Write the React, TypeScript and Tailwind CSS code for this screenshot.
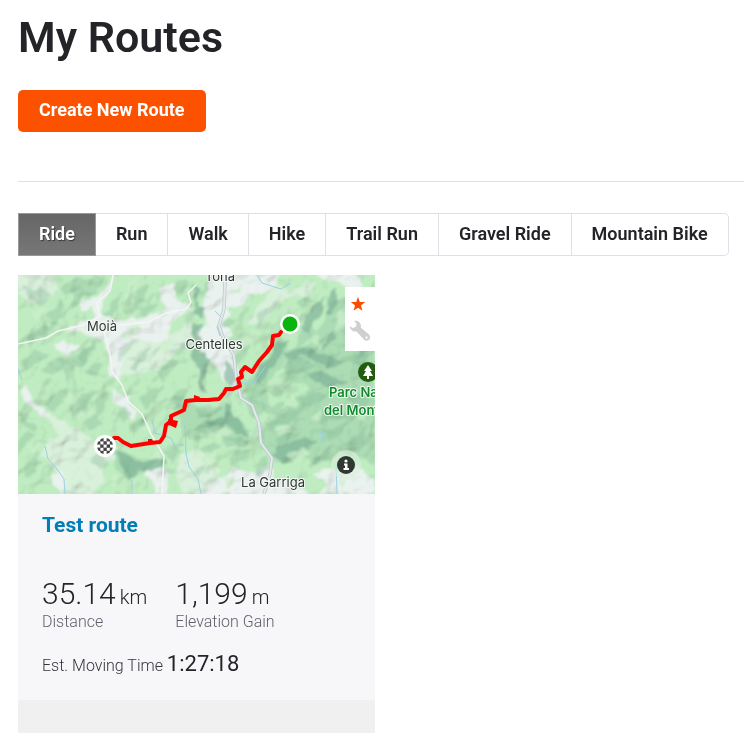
import React, { useState } from 'react';

const TABS = ['Ride', 'Run', 'Walk', 'Hike', 'Trail Run', 'Gravel Ride', 'Mountain Bike'];

const ROUTE =
  'M263 57 L261 60 L255 61 L254 70 L249 77 L241 86 L234 97 L227 92 L223 97 L224 102 L220 104 L222 111 L215 114 L208 114 L206 118 L201 124 L190 125 L178 125 L168 126 L166 135 L153 141 L153 146 L148 150 L146 161 L142 167 L132 168 L113 171 L105 167 L100 163 L96 163';

// valleys and open ground
const PLAINS = [
  'M195 0 L260 0 L256 14 L235 20 L226 29 L210 30 L212 40 L205 50 L214 60 L205 68 L216 73 L222 100 L219 113 L207 106 L196 86 L182 75 L178 60 L190 48 L183 30 L190 16 Z',
  'M62 27 L80 21 L92 9 L97 2 L93 15 L85 24 L83 40 L108 45 L130 41 L150 33 L142 23 L146 10 L156 8 L157 24 L171 31 L176 35 L160 42 L152 49 L150 63 L138 66 L118 64 L106 78 L104 90 L101 108 L92 100 L91 80 L87 69 L72 60 L44 55 L62 47 L77 42 L74 32 L62 36 Z',
  'M37 70 L48 63 L52 69 L62 68 L60 75 L48 80 L40 76 Z',
  'M3 110 L12 114 L17 128 L31 139 L24 140 L15 133 L6 127 Z',
  'M93 110 L99 119 L109 122 L119 136 L115 145 L104 130 L96 126 Z',
  'M33 200 L43 197 L48 206 L44 219 L34 208 Z',
  'M126 199 L142 190 L151 198 L149 219 L136 219 L137 211 Z',
  'M205 204 L216 193 L230 199 L247 191 L256 192 L255 205 L276 206 L290 219 L187 219 L190 210 Z',
  'M297 199 L312 193 L325 199 L340 191 L357 207 L357 219 L301 219 L309 209 Z',
  'M298 0 L338 0 L345 9 L333 15 L322 8 L306 5 Z',
];

const PALE = [
  'M0 0 L35 0 L42 14 L27 25 L9 27 L0 18 Z',
  'M93 82 L106 65 L128 56 L151 61 L170 48 L177 54 L172 69 L152 84 L139 97 L118 98 L101 104 Z',
  'M23 132 L36 140 L48 149 L60 151 L68 162 L89 170 L97 184 L84 192 L86 205 L70 219 L47 219 L45 204 L33 190 L23 180 L29 167 L42 160 L31 149 Z',
  'M258 9 L273 16 L288 7 L299 9 L285 23 L270 21 L247 45 L230 51 L240 31 Z',
  'M163 180 L180 174 L191 184 L202 195 L190 219 L166 219 L157 203 Z',
];

const WOODS = [
  'M239 96 L255 70 L267 67 L271 82 L258 97 L247 112 L252 129 L244 136 L230 122 L227 108 Z',
  'M268 76 L292 67 L312 81 L330 86 L357 90 L357 190 L342 182 L331 173 L314 186 L286 182 L268 190 L250 178 L241 157 L261 137 L276 123 L293 112 L270 106 Z',
  'M304 78 L300 56 L312 28 L330 18 L357 26 L357 100 L330 90 Z',
  'M92 176 L109 176 L124 185 L144 181 L132 193 L119 194 L111 204 L98 191 Z',
  'M157 121 L177 128 L188 138 L208 131 L218 143 L234 155 L228 167 L207 165 L187 153 L178 169 L164 160 L162 142 Z',
  'M50 16 L66 11 L78 0 L87 0 L79 17 L60 24 Z',
];

// shaded sides of the ridges
const RIDGES = [
  'M4 10 L15 15 L25 12 L32 20 L24 29 L10 22 Z', 'M28 42 L39 32 L45 22 L43 42 L36 53 Z',
  'M44 11 L59 3 L69 6 L57 17 L48 20 Z', 'M51 25 L65 17 L75 15 L63 25 L55 34 Z',
  'M9 61 L23 50 L38 53 L24 62 L12 69 Z', 'M3 87 L18 76 L31 79 L22 87 L9 94 Z',
  'M23 94 L42 82 L52 87 L37 98 Z', 'M43 94 L58 82 L71 72 L68 88 L53 98 L49 108 Z',
  'M63 77 L78 64 L74 78 L62 91 Z', 'M68 97 L80 87 L87 89 L76 101 Z',
  'M86 39 L96 25 L105 16 L101 29 L96 42 Z', 'M103 38 L116 28 L121 13 L129 9 L126 25 L113 40 Z',
  'M119 39 L131 30 L142 29 L130 40 Z', 'M155 12 L166 3 L172 5 L165 14 L159 20 Z',
  'M101 76 L113 65 L118 67 L108 78 L100 87 Z', 'M111 91 L124 77 L132 69 L128 83 L116 96 Z',
  'M140 97 L151 87 L162 87 L151 98 L145 109 Z', 'M153 77 L164 68 L170 70 L162 81 Z',
  'M182 17 L189 9 L195 4 L190 18 Z', 'M192 61 L199 69 L207 67 L200 75 Z',
  'M201 48 L212 43 L220 45 L209 53 Z', 'M212 83 L224 72 L236 59 L232 74 L219 91 Z',
  'M239 38 L255 29 L266 28 L250 40 L241 50 Z', 'M251 63 L259 61 L270 66 L260 73 Z',
  'M278 28 L286 21 L298 24 L286 32 Z', 'M281 60 L295 48 L300 59 L288 65 L280 73 Z',
  'M264 92 L277 83 L290 87 L303 91 L287 95 L272 99 Z', 'M323 83 L338 77 L353 81 L342 90 Z',
  'M249 116 L262 111 L276 99 L273 112 L261 123 Z', 'M240 127 L255 131 L267 125 L261 138 L249 139 Z',
  'M245 149 L262 145 L276 133 L289 128 L282 141 L267 150 L254 156 Z',
  'M256 165 L270 157 L283 159 L271 167 L260 174 Z',
  'M281 122 L295 116 L309 121 L298 128 L285 132 Z', 'M300 138 L314 132 L328 140 L313 145 L304 153 Z',
  'M305 158 L318 150 L332 146 L324 158 L309 167 Z', 'M323 176 L337 161 L349 150 L345 167 L334 179 Z',
  'M327 122 L344 118 L355 126 L341 132 Z', 'M291 185 L306 177 L318 175 L309 186 L297 192 Z',
  'M179 132 L192 129 L204 133 L194 140 L183 143 Z', 'M176 153 L190 144 L206 144 L201 157 L188 161 Z',
  'M203 164 L217 162 L231 164 L225 173 L210 171 Z',
  'M181 174 L195 167 L205 169 L191 180 Z', 'M210 183 L222 175 L235 174 L224 185 L214 190 Z',
  'M226 121 L236 123 L244 138 L237 143 L230 131 Z', 'M235 197 L248 182 L251 191 L242 203 Z',
  'M25 130 L39 118 L53 112 L49 125 L36 137 Z', 'M51 132 L64 121 L76 117 L67 132 L56 142 Z',
  'M77 127 L87 115 L91 118 L86 136 L79 143 Z', 'M98 141 L106 130 L114 139 L104 150 Z',
  'M109 151 L122 143 L129 147 L117 157 Z', 'M65 147 L78 139 L84 147 L71 157 Z',
  'M0 167 L9 157 L16 162 L7 171 L0 179 Z', 'M6 193 L15 181 L25 187 L15 199 L7 205 Z',
  'M2 137 L10 146 L20 151 L15 159 L3 150 Z', 'M72 186 L82 179 L91 190 L82 194 Z',
  'M145 178 L157 170 L164 178 L154 187 Z', 'M151 129 L160 117 L169 115 L162 128 Z',
  'M122 123 L134 114 L147 111 L139 124 L127 134 Z', 'M174 200 L184 190 L193 188 L182 202 Z',
  'M319 35 L337 26 L352 35 L342 45 L329 45 Z', 'M327 62 L344 53 L355 61 L341 68 Z',
];

// steep slopes
const SLOPES = [
  'M174 46 L184 49 L182 74 L193 84 L190 96 L184 104 L187 118 L180 116 L180 96 L173 82 L176 66 Z',
  'M174 10 L181 14 L180 30 L187 34 L182 42 L175 38 L178 26 Z',
  'M207 84 L214 92 L218 106 L211 110 L207 99 Z',
  'M237 102 L247 86 L258 67 L269 66 L262 82 L250 98 L240 110 Z',
  'M207 128 L213 129 L215 142 L227 151 L233 160 L222 160 L209 149 L192 152 L189 147 L207 142 Z',
  'M96 176 L108 178 L121 188 L143 183 L150 187 L135 196 L121 196 L112 206 L107 194 Z',
  'M265 78 L290 72 L312 82 L330 86 L318 92 L300 88 L284 81 L270 86 Z',
  'M288 100 L304 95 L316 104 L330 107 L314 114 L298 107 Z',
  'M283 53 L292 35 L306 22 L302 40 L290 58 Z M303 76 L312 58 L327 47 L318 66 Z M306 41 L313 18 L320 15 L316 40 Z',
  'M250 180 L266 170 L285 162 L300 165 L284 177 L268 190 Z',
  'M335 66 L347 58 L357 60 L357 76 L344 80 Z',
];

const HIGHLIGHTS = [
  'M12 36 L26 30 L31 36 L19 44 Z', 'M65 52 L77 48 L72 57 Z', 'M106 59 L117 48 L123 54 L109 64 Z',
  'M110 9 L122 4 L117 17 L107 24 Z', 'M136 72 L151 64 L157 69 L144 77 Z', 'M227 61 L241 53 L241 62 L225 76 Z',
  'M209 17 L225 11 L222 20 Z', 'M267 39 L281 42 L274 52 Z', 'M320 37 L331 29 L329 48 L318 62 Z',
  'M259 107 L272 109 L264 119 Z', 'M268 129 L278 120 L281 130 Z', 'M257 151 L269 149 L273 156 L260 161 Z',
  'M291 145 L304 134 L303 146 Z', 'M266 181 L285 172 L292 177 L278 188 Z', 'M184 124 L199 125 L189 133 Z',
  'M192 159 L207 152 L215 157 L203 164 Z', 'M182 182 L198 176 L202 183 L188 195 Z',
  'M43 127 L55 117 L57 127 Z', 'M60 140 L73 131 L74 143 Z', 'M9 171 L23 168 L17 178 Z',
  'M122 153 L137 151 L132 161 Z', 'M130 181 L145 173 L143 183 Z', 'M92 199 L102 202 L96 213 Z',
  'M338 140 L349 135 L344 148 Z', 'M208 202 L219 204 L207 217 Z', 'M317 205 L328 201 L325 214 Z',
];

const RouteMap: React.FC = () => {
  return (
    <svg viewBox="0 0 357 219" className="block w-full" role="img" aria-label="Test route map">
      <defs>
        <filter id="soften" x="0" y="0" width="100%" height="100%">
          <feTurbulence type="fractalNoise" baseFrequency="0.08" numOctaves="2" seed="4" result="n" />
          <feDisplacementMap in="SourceGraphic" in2="n" scale="9" xChannelSelector="R" yChannelSelector="G" />
          <feGaussianBlur stdDeviation="0.8" />
        </filter>
        <filter id="relief" x="0" y="0" width="100%" height="100%">
          <feTurbulence type="fractalNoise" baseFrequency="0.035" numOctaves="3" seed="11" result="n" />
          <feColorMatrix in="n" values="0 0 0 0 0  0 0 0 0 0  0 0 0 0 0  1 0 0 0 0" />
          <feDiffuseLighting surfaceScale="13" diffuseConstant="1.25" lightingColor="#ffffff">
            <feDistantLight azimuth="225" elevation="55" />
          </feDiffuseLighting>
        </filter>
        <clipPath id="flag">
          <circle cx="87" cy="171" r="8" />
        </clipPath>
      </defs>

      <rect width="357" height="219" fill="#bdeabf" />
      <g filter="url(#soften)">
        <rect x="-10" y="-10" width="377" height="239" fill="#bfecc1" />
        {WOODS.map((d) => (
          <path key={d} d={d} fill="#abdcb3" />
        ))}
        {PALE.map((d) => (
          <path key={d} d={d} fill="#d9f0db" />
        ))}
        {PLAINS.map((d) => (
          <path key={d} d={d} fill="#eaf2ef" />
        ))}
        {RIDGES.map((d) => (
          <path key={d} d={d} fill="#80b696" opacity="0.34" />
        ))}
        {SLOPES.map((d) => (
          <path key={d} d={d} fill="#76ab92" opacity="0.6" />
        ))}
        {HIGHLIGHTS.map((d) => (
          <path key={d} d={d} fill="#ccf0cb" opacity="0.75" />
        ))}
      </g>
      <rect width="357" height="219" filter="url(#relief)" opacity="0.16" className="mix-blend-multiply" />

      {/* rivers */}
      <g fill="none" stroke="#9bd0e6" strokeWidth="1">
        <path d="M27 171 L30 184 L39 194 L46 204 L47 219" />
        <path d="M167 150 L168 178 L171 192 L180 204 L183 219" />
        <path d="M134 145 L137 158 L153 163 L156 170 L166 170" />
        <path d="M239 0 L244 8 L263 14 L273 8" />
        <path d="M318 188 L319 219 M114 205 L114 219 M0 94 L4 105" />
        <path d="M302 156 L305 160 L304 166" strokeWidth="2" />
        <path d="M197 36 L204 43 L199 52 L202 61 M224 108 L236 108 L247 92" />
      </g>

      {/* roads */}
      <g fill="none" strokeLinejoin="round">
        <path d="M0 69 L28 63 L40 56 L66 50 L82 41 L79 28 L92 16 L95 0" stroke="#f3f6f5" strokeWidth="1.5" />
        <path d="M86 57 L92 80 L94 97 L104 110 L110 126 L124 139 L133 159 L146 181 L144 219" stroke="#f3f6f5" strokeWidth="1.5" />
        <path d="M86 57 L103 50 L130 47 L148 38 L168 34 L173 27 L170 18 L178 10" stroke="#f3f6f5" strokeWidth="1.5" />
        <path d="M207 7 L206 34 L201 51 L206 65 L216 80 L218 101 L223 123 L234 130 L241 148 L243 168 L254 183 L252 199 L246 219" stroke="#bdc8cc" strokeWidth="3.5" />
        <path d="M207 7 L206 34 L201 51 L206 65 L216 80 L218 101 L223 123 L234 130 L241 148 L243 168 L254 183 L252 199 L246 219" stroke="#e4e9ec" strokeWidth="2" />
      </g>

      {/* places */}
      <g
        className="font-['Inter',sans-serif] text-[13px]"
        fill="#333638"
        stroke="#f3faf3"
        strokeWidth="2"
        strokeLinejoin="round"
        paintOrder="stroke"
      >
        <text x="202" y="6" textAnchor="middle">Tona</text>
        <text x="84" y="56" textAnchor="middle">Moià</text>
        <text x="196" y="74" textAnchor="middle">Centelles</text>
        <text x="255" y="212" textAnchor="middle">La Garriga</text>
        <g fill="#118a2c" className="font-semibold">
          <text x="311" y="122">Parc Natural</text>
          <text x="306" y="140">del Montseny</text>
        </g>
      </g>
      <circle cx="350" cy="97" r="10" fill="#215c0f" />
      <path d="M350 90 L354 96 H352 L355 101 H351 V104 H349 V101 H345 L348 96 H346 Z" fill="#ffffff" />

      <path d={ROUTE} fill="none" stroke="#ff0000" strokeWidth="4" strokeLinejoin="round" strokeLinecap="round" />
      <path d="M150 144 L160 146 L158 153 L151 150 Z M130 164 L134 164 L136 169 H130 Z M176 120 L182 122 L180 127 H176 Z" fill="#ff0000" />
      <circle cx="272" cy="49" r="10" fill="#ffffff" />
      <circle cx="272" cy="49" r="7.5" fill="#08b50b" />
      <circle cx="87" cy="171" r="11" fill="#ffffff" />
      <g clipPath="url(#flag)" fill="#444444">
        {[0, 1, 2, 3, 4].map((row) =>
          [0, 1, 2, 3, 4].map(
            (col) =>
              (row + col) % 2 === 1 && (
                <rect key={`${row}-${col}`} x={79 + col * 3.2} y={163 + row * 3.2} width="3.4" height="3.4" />
              )
          )
        )}
      </g>

      <circle cx="328" cy="190" r="15" fill="#dcefdc" opacity="0.6" />
      <circle cx="328" cy="190" r="9" fill="#2f3833" />
      <circle cx="328" cy="186" r="1.6" fill="#ffffff" />
      <path d="M326 188.5 H329.5 V193 H331 V195 H325.5 V193 H327 V190.5 H326 Z" fill="#ffffff" />
    </svg>
  );
};

const RouteCard: React.FC = () => {
  const [starred, setStarred] = useState(true);

  return (
    <article className="w-full max-w-[357px] bg-[#f7f7fa]">
      <div className="relative">
        <RouteMap />
        <div className="absolute top-3 right-0 flex w-[30px] flex-col items-center gap-2 bg-white py-[9px] pr-1">
          <button type="button" aria-label="Star route" aria-pressed={starred} onClick={() => setStarred(!starred)}>
            <svg width="16" height="16" viewBox="0 0 16 16" className="block">
              <path d="M8 .8 L9.8 6 L15.2 6.1 L10.9 9.5 L12.5 14.8 L8 11.7 L3.5 14.8 L5.1 9.5 L.8 6.1 L6.2 6 Z" fill={starred ? '#fc4c02' : '#cccccc'} />
            </svg>
          </button>
          <button type="button" aria-label="Edit route" className="self-end">
            <svg width="22" height="22" viewBox="0 0 22 22" className="block">
              <path d="M5.2 1 C9 .2 12.2 2.8 11.9 6.5 L11.8 7.4 L20 14.4 C21.6 16 21.5 18.4 20.1 19.8 C18.6 21.2 16.2 20.9 14.8 19.4 L7.6 11.4 C4.2 12 1 9.8 .6 6.2 L3.9 8 L6.8 6.9 L7.6 4.1 Z M17.6 16.5 A1.1 1.1 0 1 0 17.6 18.7 A1.1 1.1 0 1 0 17.6 16.5 Z" fill="#d0d0d0" fillRule="evenodd" />
            </svg>
          </button>
        </div>
      </div>

      <div className="px-6 pt-4 pb-[18px]">
        <h2 className="text-[21px] leading-[30px] font-bold text-[#007fb6]">
          <a href="#route">Test route</a>
        </h2>
        <dl className="mt-9 flex gap-7">
          <div className="flex flex-col-reverse">
            <dt className="text-[16px] leading-5 font-light text-[#5f5f6a]">Distance</dt>
            <dd className="text-[30px] leading-9 font-light">
              35.14<span className="ml-1 text-xl">km</span>
            </dd>
          </div>
          <div className="flex flex-col-reverse">
            <dt className="text-[16px] leading-5 font-light text-[#5f5f6a]">Elevation Gain</dt>
            <dd className="text-[30px] leading-9 font-light">
              1,199<span className="ml-1 text-xl">m</span>
            </dd>
          </div>
        </dl>
        <p className="mt-4 text-[16px] leading-8 font-light text-[#33333a]">
          Est. Moving Time <span className="text-[22px] font-normal text-[#242428]">1:27:18</span>
        </p>
      </div>
      <div className="h-[33px] bg-[#f0f0f0]" />
    </article>
  );
};

const App: React.FC = () => {
  const [active, setActive] = useState('Ride');

  return (
    <main className="bg-white pt-3 pb-5 pl-[18px] font-['Roboto',sans-serif] text-[#242428]">
      <h1 className="text-[43px] leading-[50px] font-semibold">My Routes</h1>
      <button type="button" className="mt-7 block h-[42px] rounded-[5px] bg-[#fc5200] px-[21px] pb-1 text-[18px] font-bold text-white">
        Create New Route
      </button>
      <hr className="mt-[49px] border-[#dfdfe8]" />

      <nav className="mt-[31px] flex">
        {TABS.map((tab) => (
          <button
            key={tab}
            type="button"
            onClick={() => setActive(tab)}
            className={`h-[43px] border-y border-r px-5 pb-0.5 text-[18px] font-semibold whitespace-nowrap first:border-l last:rounded-r-[5px] ${
              active === tab
                ? 'border-[#999] bg-linear-to-b from-[#666] to-[#777] text-white [text-shadow:1px_1px_1px_rgba(0,0,0,0.5)]'
                : 'border-[#dfdfe8] bg-white'
            }`}
          >
            {tab}
          </button>
        ))}
      </nav>

      <section className="mt-[19px]">
        <RouteCard />
      </section>
    </main>
  );
};

export default App;
